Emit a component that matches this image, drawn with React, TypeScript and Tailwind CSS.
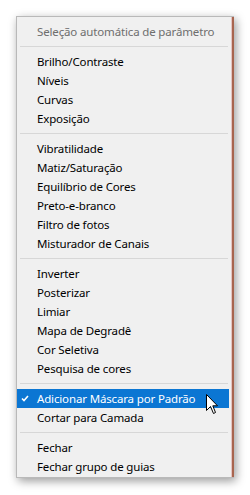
const groups: string[][] = [
  ["Brilho/Contraste", "Níveis", "Curvas", "Exposição"],
  ["Vibratilidade", "Matiz/Saturação", "Equilíbrio de Cores", "Preto-e-branco", "Filtro de fotos", "Misturador de Canais"],
  ["Inverter", "Posterizar", "Limiar", "Mapa de Degradê", "Cor Seletiva", "Pesquisa de cores"],
  ["Adicionar Máscara por Padrão", "Cortar para Camada"],
  ["Fechar", "Fechar grupo de guias"],
]

const Separator = () => (
  <div className="h-[11px] flex items-center pl-[3px] pr-[3px]">
    <div className="h-px w-full bg-[#d7d7d7]" />
  </div>
)

const Item = ({ label }: { label: string }) => {
  const active = label === "Adicionar Máscara por Padrão"
  return (
    <div
      className={
        active
          ? "relative h-[19px] flex items-center pl-[20px] mr-[2px] bg-[#0b76d3] text-white"
          : "h-[19px] flex items-center pl-[20px] text-black"
      }
    >
      {active && (
        <svg className="absolute left-[4px] top-[6px]" width="8" height="7" viewBox="0 0 8 7">
          <polyline points="1,3.5 3,5.5 7,1" fill="none" stroke="white" strokeWidth="1.6" />
        </svg>
      )}
      {label}
    </div>
  )
}

export default function App() {
  return (
    <div className="relative w-[250px] h-[495px] bg-white pt-[16px] pl-[16px]">
      <div
        className="w-[218px] h-[462px] bg-[#f0f0f0] border border-[#b9b9b9] border-r-0 flex shadow-[2px_3px_9px_rgba(0,0,0,0.4)]"
        style={{ fontFamily: '"Noto Sans", "Open Sans", sans-serif' }}
      >
        <div className="flex-1 pt-[5px] text-[11.5px] tracking-[-0.15px] leading-[19px]">
          <div className="h-[19px] flex items-center pl-[20px] text-[#6e6e6e]">Seleção automática de parâmetro</div>
          {groups.map((group, i) => (
            <div key={i}>
              <Separator />
              {group.map((label) => (
                <Item key={label} label={label} />
              ))}
            </div>
          ))}
        </div>
        <div className="w-px bg-[#e6c4c0]" />
        <div className="w-[2px] bg-[#a8654f]" />
      </div>
      <svg className="absolute left-[206px] top-[394px]" width="13" height="21" viewBox="0 0 13 21">
        <path
          d="M0.5 0.5 L0.5 16.5 L4.5 12.5 L7.5 19.5 L9.5 18.5 L6.8 11.8 L11.5 11.8 Z"
          fill="white"
          stroke="black"
          strokeWidth="1"
          strokeLinejoin="miter"
        />
      </svg>
    </div>
  )
}
